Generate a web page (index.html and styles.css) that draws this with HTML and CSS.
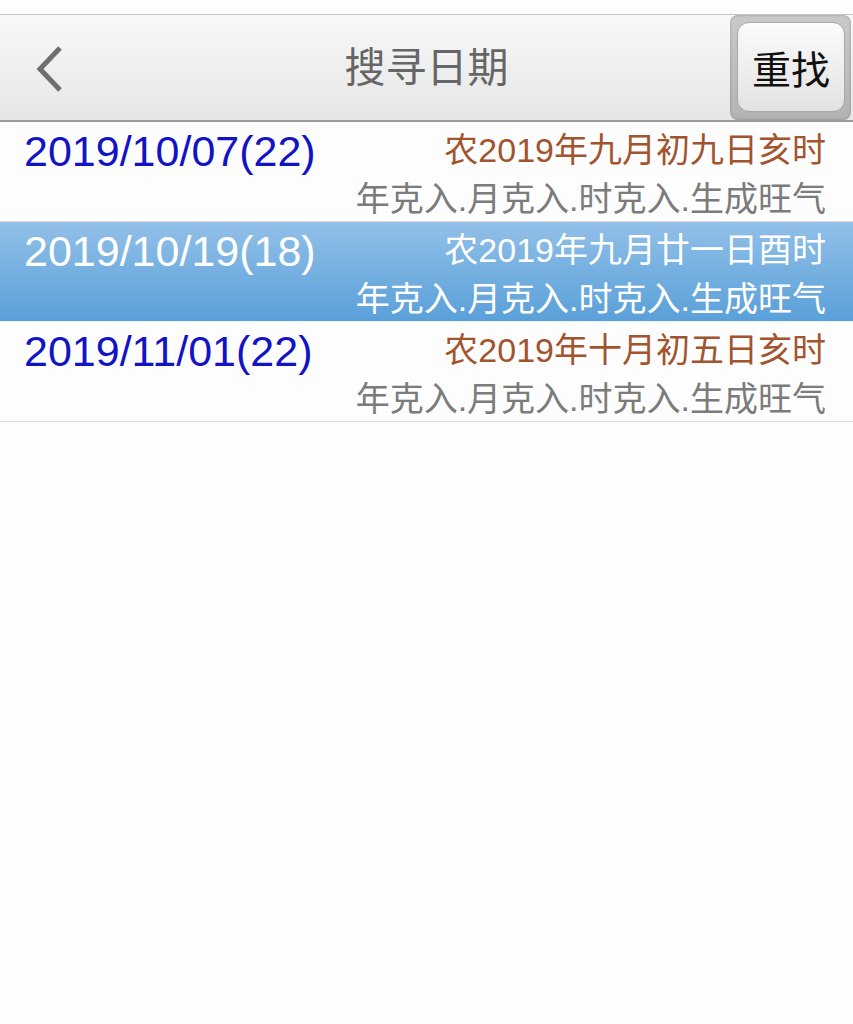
FILE: index.html
```html
<!DOCTYPE html>
<html lang="zh-CN">
<head>
  <meta charset="UTF-8" />
  <title>搜寻日期</title>
  <meta name="viewport" content="width=device-width, initial-scale=1" />
  <link rel="stylesheet" href="styles.css">
</head>
<body>
  <div class="topbar">
    <button class="back" aria-label="返回">
      <svg width="30" height="50" viewBox="0 0 30 50">
        <polyline points="24,4 4,25 24,46" fill="none" stroke="#6f6f6f" stroke-width="5" />
      </svg>
    </button>
    <div class="title">搜寻日期</div>
    <div class="reset-frame">
      <button class="reset">重找</button>
    </div>
  </div>

  <ul class="list">
    <li class="row">
      <div class="date">2019/10/07(22)</div>
      <div class="info">
        <div class="lunar">农2019年九月初九日亥时</div>
        <div class="note">年克入.月克入.时克入.生成旺气</div>
      </div>
    </li>
    <li class="row selected">
      <div class="date">2019/10/19(18)</div>
      <div class="info">
        <div class="lunar">农2019年九月廿一日酉时</div>
        <div class="note">年克入.月克入.时克入.生成旺气</div>
      </div>
    </li>
    <li class="row">
      <div class="date">2019/11/01(22)</div>
      <div class="info">
        <div class="lunar">农2019年十月初五日亥时</div>
        <div class="note">年克入.月克入.时克入.生成旺气</div>
      </div>
    </li>
  </ul>
</body>
</html>
```

FILE: styles.css
```css
body {
  margin: 0;
  padding: 14px 0 0;
  background: #fdfdfd;
  font-family: 'Liberation Sans', 'Noto Sans CJK SC', sans-serif;
  color: #222;
}
.topbar {
  height: 105px;
  border-top: 1px solid #c4c4c4;
  border-bottom: 2px solid #9a9a9a;
  background: linear-gradient(#f8f8f8, #e6e6e6);
  display: flex;
  align-items: center;
  position: relative;
}
.back {
  border: none;
  background: none;
  padding: 0;
  margin: 2px 0 0 36px;
  width: 30px;
  height: 50px;
  display: flex;
}
.title {
  position: absolute;
  left: 0; right: 0;
  top: 25px;
  text-align: center;
  font-size: 41px;
  line-height: 56px;
  color: #666;
  pointer-events: none;
}
.reset-frame {
  margin-left: auto;
  margin-right: 2px;
  align-self: stretch;
  width: 121px;
  box-sizing: border-box;
  padding: 7px 6px 8px 7px;
  border-radius: 8px;
  background: linear-gradient(#c9c9c9, #b3b3b3);
  box-shadow: inset 0 0 3px rgba(0,0,0,0.25);
}
.reset {
  width: 100%;
  height: 100%;
  border: 1px solid #a8a8a8;
  border-radius: 12px;
  background: linear-gradient(#fbfbfb, #e2e2e2);
  font-family: 'Noto Sans CJK SC', sans-serif;
  font-size: 39px;
  color: #111;
  padding: 0;
}
.list {
  list-style: none;
  margin: 0;
  padding: 0;
}
.row {
  height: 100px;
  border-bottom: 1px solid #dcdcdc;
  display: flex;
  justify-content: space-between;
  padding: 2px 27px 0 24px;
  box-sizing: border-box;
}
.date {
  font-size: 43px;
  line-height: 54px;
  color: #1212c6;
}
.info {
  text-align: right;
}
.lunar {
  font-size: 34px;
  line-height: 52px;
  color: #a2542e;
}
.note {
  font-size: 34px;
  line-height: 47px;
  color: #7b7b7b;
}
.row.selected {
  background: linear-gradient(#92c0e8, #5aa0d9);
  border-bottom-color: #e8eef5;
}
.row.selected .date,
.row.selected .lunar,
.row.selected .note {
  color: #fff;
}
```
